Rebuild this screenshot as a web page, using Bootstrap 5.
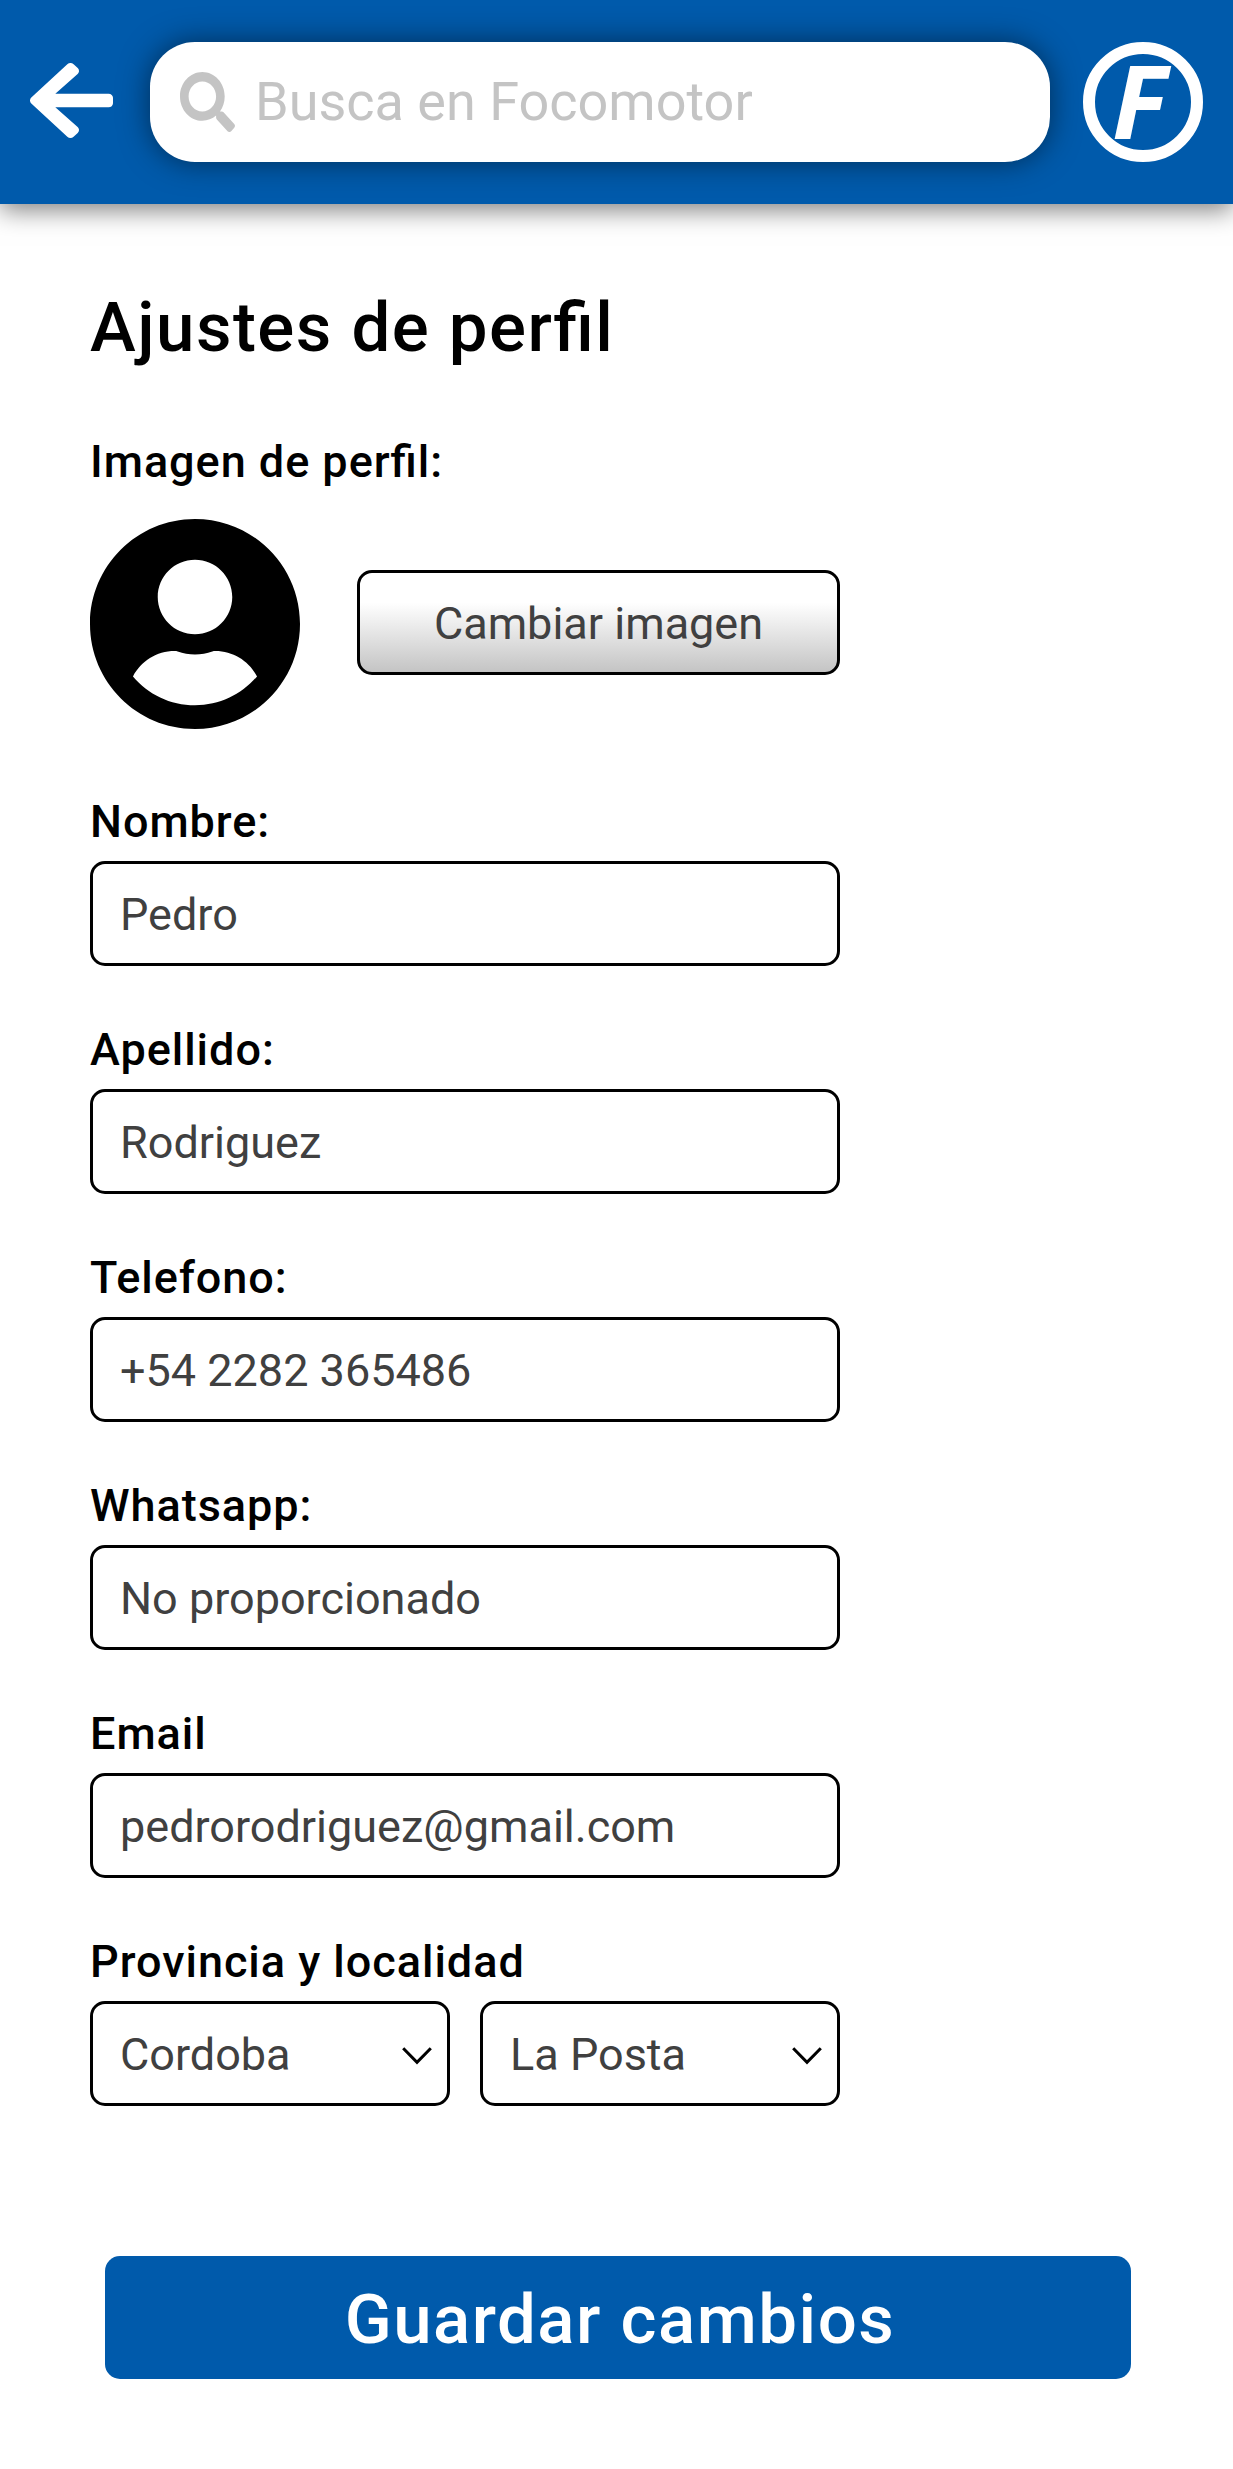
<!DOCTYPE html>
<html lang="es">
<head>
<meta charset="utf-8">
<meta name="viewport" content="width=device-width, initial-scale=1">
<title>Focomotor - Ajustes de perfil</title>
<link href="https://cdn.jsdelivr.net/npm/bootstrap@5.3.0/dist/css/bootstrap.min.css" rel="stylesheet">
<style>
  :root { --brand: #005aab; --muted-ink: #404040; --placeholder: #c4c4c4; }
  body { font-family: Roboto, "Liberation Sans", sans-serif; color: #000; background: #fff; }
  .topbar { height: 204px; padding: 0 30px; background: var(--brand); box-shadow: 0 6px 24px rgba(0,0,0,.5); }
  .back-link { width: 83px; margin: 0 37px 3px 0; line-height: 0; }
  .search-box { width: 900px; height: 120px; border-radius: 45px; padding: 0 30px; background: #fff; box-shadow: 0 0 30px rgba(0,0,0,.5); }
  .search-box .form-control { font-size: 54px; line-height: 64px; padding: 0; margin-left: 20px; }
  .search-box .form-control::placeholder { color: var(--placeholder); opacity: 1; }
  .brand-link { margin-left: 33px; line-height: 0; }
  .brand-link svg { overflow: visible; }
  .brand-link text { font: italic 700 103px "Noto Sans", "Liberation Sans", sans-serif; }
  .profile { padding: 83px 90px 0; }
  .medium-text { font-weight: 500; letter-spacing: .0215em; font-feature-settings: "liga" 1; }
  .page-title { font-size: 69px; line-height: 81px; margin: 0 0 67px; }
  .profile-form { width: 750px; }
  .profile-form .form-label { display: block; font-size: 45px; line-height: 53px; margin: 0 0 13px; }
  .field-block { margin-bottom: 57px; }
  .picture-row { margin: 31px 0 66px; gap: 57px; }
  .select-row { gap: 30px; }
  .profile-form .form-control, .profile-form .form-select, .change-btn {
    height: 105px; border: 3px solid #000; border-radius: 15px; font-size: 45px; line-height: 53px; color: var(--muted-ink);
  }
  .profile-form .form-control, .profile-form .form-select { padding: 2px 27px 0; background-color: #fff; }
  .profile-form .form-select {
    background-image: url("data:image/svg+xml,%3Csvg xmlns='http://www.w3.org/2000/svg' viewBox='0 0 30 18'%3E%3Cpath d='M1.2 1.2 15 15.4 28.8 1.2' fill='none' stroke='%23000' stroke-width='3'/%3E%3C/svg%3E");
    background-size: 30px 18px; background-position: right 15px top 43px;
  }
  .change-btn { background: linear-gradient(#fff 0, #fff 30%, #c4c4c4 100%); padding: 2px 0 0; margin-bottom: 3px; }
  .save-btn { display: block; width: 1026px; height: 123px; margin: 150px 0 0 15px; padding: 3px 0 0 4px; border: 0; border-radius: 15px; background: var(--brand); color: #fff; font-size: 69px; line-height: 81px; }
</style>
</head>
<body>
<header class="topbar d-flex align-items-center">
  <a class="back-link" href="#" aria-label="Volver">
    <svg width="83" height="75" viewBox="0 37.6 448 436.8" preserveAspectRatio="none" fill="#fff"><path d="M257.5 445.1l-22.2 22.2c-9.4 9.4-24.6 9.4-33.9 0L7 273c-9.4-9.4-9.4-24.6 0-33.9L201.4 44.7c9.4-9.4 24.6-9.4 33.9 0l22.2 22.2c9.5 9.5 9.3 25-.4 34.3L136.6 216H424c13.3 0 24 10.7 24 24v32c0 13.3-10.7 24-24 24H136.6l120.5 114.8c9.8 9.3 10 24.8.4 34.3z"/></svg>
  </a>
  <form class="search-box d-flex align-items-center flex-shrink-0">
    <svg class="flex-shrink-0" width="55" height="60" viewBox="0 0 512 512" preserveAspectRatio="none" fill="#c4c4c4"><path d="M505 442.7L405.3 343c-4.5-4.5-10.6-7-17-7H372c27.6-35.3 44-79.7 44-128C416 93.1 322.9 0 208 0S0 93.1 0 208s93.1 208 208 208c48.3 0 92.7-16.4 128-44v16.3c0 6.4 2.5 12.5 7 17l99.7 99.7c9.4 9.4 24.6 9.4 33.9 0l28.3-28.3c9.4-9.4 9.4-24.6.1-34zM208 336c-70.7 0-128-57.2-128-128 0-70.7 57.2-128 128-128 70.7 0 128 57.2 128 128 0 70.7-57.2 128-128 128z"/></svg>
    <input class="form-control border-0 bg-transparent shadow-none" type="search" placeholder="Busca en Focomotor" aria-label="Buscar">
  </form>
  <a class="brand-link" href="#" aria-label="Focomotor">
    <svg width="120" height="120" viewBox="0 0 120 120"><circle cx="60" cy="60" r="54" fill="none" stroke="#fff" stroke-width="12"/><text x="29" y="96.5" fill="#fff">F</text></svg>
  </a>
</header>

<main class="profile">
  <h1 class="page-title medium-text">Ajustes de perfil</h1>
  <form>
    <div class="profile-form">
      <span class="form-label medium-text mb-0">Imagen de perfil:</span>
      <div class="picture-row d-flex align-items-center">
        <svg class="flex-shrink-0" width="210" height="210" viewBox="0 8 496 496"><path d="M248 8C111 8 0 119 0 256s111 248 248 248 248-111 248-248S385 8 248 8zm0 96c48.6 0 88 39.4 88 88s-39.4 88-88 88-88-39.4-88-88 39.4-88 88-88zm0 344c-58.7 0-111.3-26.6-146.5-68.2 18.8-35.4 55.6-59.8 98.5-59.8 2.4 0 4.8.4 7.1 1.1 13 4.2 26.6 6.9 40.9 6.9 14.3 0 28-2.7 40.9-6.9 2.3-.7 4.7-1.1 7.1-1.1 42.9 0 79.7 24.4 98.5 59.8C359.3 421.4 306.7 448 248 448z"/></svg>
        <button class="btn change-btn flex-grow-1" type="button">Cambiar imagen</button>
      </div>
      <div class="field-block">
        <label class="form-label medium-text" for="nombre">Nombre:</label>
        <input class="form-control" id="nombre" type="text" value="Pedro">
      </div>
      <div class="field-block">
        <label class="form-label medium-text" for="apellido">Apellido:</label>
        <input class="form-control" id="apellido" type="text" value="Rodriguez">
      </div>
      <div class="field-block">
        <label class="form-label medium-text" for="telefono">Telefono:</label>
        <input class="form-control" id="telefono" type="tel" value="+54 2282 365486">
      </div>
      <div class="field-block">
        <label class="form-label medium-text" for="whatsapp">Whatsapp:</label>
        <input class="form-control" id="whatsapp" type="text" value="No proporcionado">
      </div>
      <div class="field-block">
        <label class="form-label medium-text" for="email">Email</label>
        <input class="form-control" id="email" type="email" value="pedrorodriguez@gmail.com">
      </div>
      <label class="form-label medium-text" for="provincia">Provincia y localidad</label>
      <div class="select-row d-flex">
        <select class="form-select" id="provincia"><option>Cordoba</option></select>
        <select class="form-select" id="localidad" aria-label="Localidad"><option>La Posta</option></select>
      </div>
    </div>
    <button class="btn save-btn medium-text" type="submit">Guardar cambios</button>
  </form>
</main>
<script src="https://cdn.jsdelivr.net/npm/bootstrap@5.3.0/dist/js/bootstrap.bundle.min.js"></script>
</body>
</html>
